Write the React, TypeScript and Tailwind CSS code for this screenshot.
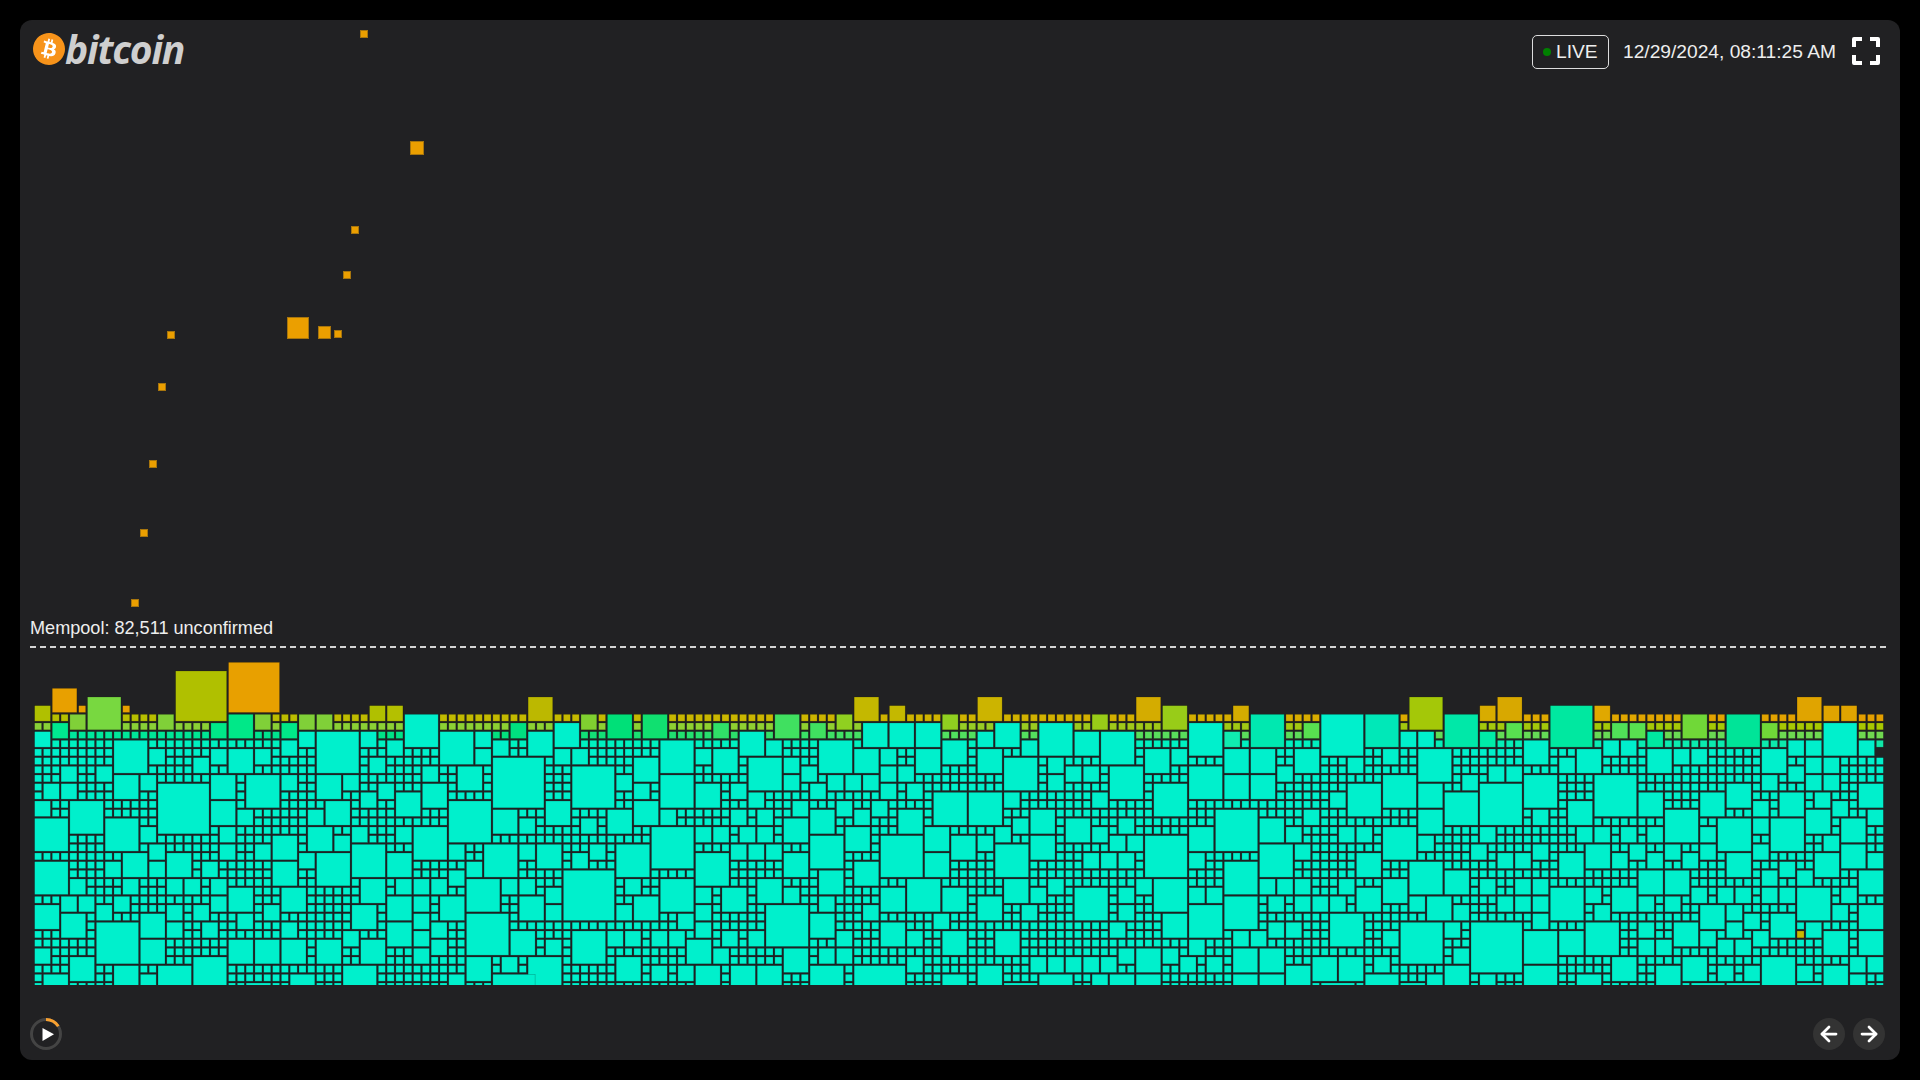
import { ArrowLeft, ArrowRight } from 'lucide-react';

const PITCH_X = 8.812;
const PITCH_Y = 8.667;
const COLS = 210;
const ROWS = 38;
const TEAL = '#00f0cc';

// coloured blocks along the top of the stack: col, row, size, fill
const hot: [number, number, number, string][] = [
  [22, 0, 6, '#e8a000'], [16, 1, 6, '#b0c000'], [2, 3, 3, '#e8a000'], [6, 4, 4, '#78d840'],
  [0, 5, 2, '#b0c000'], [5, 5, 1, '#e8a000'], [10, 5, 1, '#e8a000'], [4, 6, 2, '#80d038'],
  [14, 6, 2, '#80d038'], [25, 6, 2, '#80d038'], [30, 6, 2, '#80d038'], [32, 6, 2, '#80d038'],
  [2, 7, 2, '#00e890'], [20, 7, 2, '#00e888'], [22, 6, 3, '#00e888'], [28, 7, 2, '#00e888'],
  [38, 5, 2, '#b0c000'], [40, 5, 2, '#b4c000'], [54, 7, 2, '#00e080'], [56, 4, 3, '#bcb800'],
  [62, 6, 2, '#80d030'], [65, 6, 3, '#00e078'], [69, 6, 3, '#10e070'], [84, 6, 3, '#40e060'],
  [77, 7, 2, '#30e068'], [88, 7, 2, '#40e060'], [91, 6, 2, '#90d020'], [93, 4, 3, '#c4b800'],
  [97, 5, 2, '#c4b800'], [103, 6, 2, '#90d020'], [107, 4, 3, '#ccb400'], [125, 4, 3, '#d4ac00'],
  [128, 5, 3, '#98cc18'], [136, 5, 2, '#d4ac00'], [120, 6, 2, '#98cc18'], [138, 6, 4, '#00e8b0'],
  [144, 7, 2, '#58e050'], [156, 4, 4, '#a4c808'], [151, 6, 4, '#00e8b8'], [160, 6, 4, '#00e8a8'],
  [164, 5, 2, '#d8ac00'], [166, 4, 3, '#d8a800'], [167, 7, 2, '#58e050'], [164, 8, 2, '#00eca8'],
  [172, 5, 5, '#00e8a0'], [177, 5, 2, '#e0a800'], [179, 7, 2, '#50e058'], [181, 7, 2, '#58e050'],
  [183, 8, 2, '#00e8a0'], [187, 6, 3, '#70d838'], [192, 6, 4, '#00e498'], [196, 7, 2, '#70d838'],
  [200, 4, 3, '#e0a400'], [203, 5, 2, '#e0a400'], [205, 5, 2, '#e0a400'], [135, 8, 2, '#10ecb0'],
  [200, 31, 1, '#c8b800'],
];

// everything bigger than one cell below the hot band, "col,row,size"
const blocks = `
0,8,2 30,8,2 32,8,5 9,9,4 28,9,2 13,10,2 20,10,2 22,10,3 25,10,2 18,11,2 3,12,2 7,12,2 9,13,3 12,13,2
20,13,3 24,13,4 28,13,2 32,13,3 1,14,2 3,14,2 14,14,6 20,16,3 23,17,2 0,16,2 4,16,4 33,16,3 31,17,2 0,18,4
8,18,4 12,19,2 21,19,2 31,19,3 27,20,3 34,20,2 25,21,2 21,21,2 13,21,2 0,23,4 10,22,3 15,22,3 13,23,2 19,23,2
8,23,2 27,23,3 30,22,2 32,22,4 4,25,2 10,25,2 15,25,2 17,25,2 20,25,2 22,26,3 28,26,3 3,27,2 5,27,2 9,27,2
20,27,2 0,28,3 3,29,3 7,28,2 15,28,2 18,28,2 23,29,2 26,28,2 7,30,5 12,29,3 15,30,2 19,30,2 28,30,2 0,33,2
12,32,3 4,34,3 22,32,3 25,32,3 28,32,3 32,32,3 9,35,3 18,34,4 14,35,4 1,36,3 12,36,2 29,36,3 24,37,3
42,6,4 46,8,4 50,8,2 50,10,2 52,9,2 56,8,3 59,7,3 59,10,2 61,10,2 37,8,2 40,9,2 38,11,2 44,12,2 48,12,3
35,13,2 39,14,2 37,15,2 41,15,3 44,14,3 52,11,6 61,12,5 66,13,2 68,11,3 68,14,2 47,16,5 58,16,3 52,17,3 55,18,2
62,18,2 65,17,3 68,16,3 36,19,2 41,19,2 43,19,4 36,21,4 47,21,2 51,21,4 55,21,2 57,21,3 63,21,2 61,22,2
66,21,4 40,22,3 49,23,2 47,24,2 60,24,6 37,25,3 41,25,2 43,25,2 45,25,2 49,25,4 53,25,2 55,25,2 58,26,2 67,25,2
40,27,3 43,27,2 46,27,3 55,27,3 68,27,3 36,28,3 58,28,2 66,28,2 43,29,2 49,29,5 40,30,3 45,30,2 35,31,2 43,31,2
54,31,3 61,31,4 65,31,2 67,31,2 37,32,3 45,32,2 58,32,2 43,33,2 49,34,3 53,34,2 56,34,4 66,34,3 35,35,4 47,36,2 52,36,5
94,7,3 97,7,3 100,7,3 80,8,3 83,9,2 71,9,4 75,10,2 77,10,3 89,9,4 93,10,3 96,10,2 100,10,3 103,9,3 81,11,4
85,11,2 87,12,2 96,12,2 98,12,2 71,13,4 90,13,2 92,13,2 94,13,2 85,13,2 75,14,3 79,14,2 88,14,2 96,14,2 99,14,2
81,15,2 102,15,4 86,16,2 91,16,2 95,16,2 71,17,2 79,17,2 82,17,2 88,17,3 93,17,2 98,17,3 85,18,3 70,19,5 75,19,2
77,19,2 80,19,2 82,19,2 92,19,3 101,19,3 88,20,4 96,20,5 104,20,3 79,21,2 81,21,2 83,21,2 75,22,4 85,22,3 101,22,3
93,23,3 89,24,3 71,25,4 82,25,3 99,25,4 75,26,2 78,26,3 85,26,2 96,26,3 103,26,3 89,27,2 75,28,2 83,28,5 94,28,2
73,29,2 88,29,3 102,29,2 75,30,2 96,30,3 70,31,2 72,31,2 78,31,2 81,31,2 91,31,2 99,31,2 103,31,3 74,32,3 77,33,2
85,33,3 89,33,2 91,33,2 99,34,2 70,35,2 73,35,2 75,35,3 79,35,3 82,35,3 88,35,4 93,35,6 103,36,3
109,7,3 114,7,4 131,7,4 107,8,2 118,8,3 121,8,4 112,9,2 107,10,3 126,10,3 129,10,2 135,10,3 138,10,3 110,11,4 115,11,2
117,12,2 119,12,2 122,12,4 131,12,4 115,13,2 127,14,4 135,13,3 138,13,3 106,15,4 110,15,2 120,15,2 113,17,3 134,17,5 111,18,2
117,18,3 120,19,2 123,18,2 139,18,3 109,19,2 131,19,3 107,20,2 113,20,3 122,20,2 124,20,2 126,20,5 109,21,4 139,21,4 119,22,2
121,22,2 123,22,2 131,22,2 135,23,4 110,25,3 115,25,2 125,25,2 127,25,4 113,26,2 118,26,4 123,26,2 131,26,2 133,26,2 139,25,2
107,27,3 135,27,4 112,28,2 123,28,2 131,28,4 128,29,3 122,30,2 109,31,3 136,31,2 138,31,2 131,32,2 123,33,2 125,33,3 128,33,2
136,33,3 139,33,3 130,34,2 133,34,2 113,34,2 115,34,2 117,34,2 119,34,2 121,34,2 107,35,3 114,36,4 120,36,2 122,36,3 125,36,3
136,36,3 139,36,3 110,37,4 140,27,2 140,30,2
146,6,5 155,8,2 157,8,2 169,9,3 143,10,3 153,10,2 157,10,4 149,11,2 173,11,2 175,10,3 141,12,2 165,12,2 167,12,2
162,13,2 153,13,4 169,13,4 149,14,4 157,14,3 164,14,5 147,15,2 160,15,4 174,16,3 144,17,2 157,17,3 170,17,2 142,19,2 148,19,2
150,19,2 153,19,4 164,19,2 157,20,2 143,21,2 163,21,2 170,21,2 150,22,3 166,22,2 168,22,2 173,22,3 156,23,4 160,24,3 141,25,2
143,25,2 148,25,2 153,25,3 164,25,2 168,25,2 170,25,2 150,26,3 172,26,4 143,27,2 145,27,2 147,27,2 166,27,2 168,27,2 170,27,2
156,27,2 158,27,3 161,28,2 170,29,2 147,29,4 142,30,2 155,30,5 160,30,2 163,30,6 169,31,4 173,31,3 153,31,2 161,33,2 145,34,3
148,34,3 152,34,2 142,35,3 160,35,3 169,35,4 151,36,4 158,36,2 164,36,2 155,37,3 146,37,4
178,9,2 180,9,2 199,9,2 201,9,2 207,9,2 203,7,4 183,10,3 186,10,2 188,10,2 196,10,3 201,11,2 203,11,2 199,12,2 177,13,5
196,13,2 201,13,2 203,13,2 192,14,3 207,14,3 182,15,3 189,15,3 198,15,3 202,15,2 204,16,2 195,16,2 185,17,4 201,17,3 208,17,2
191,18,4 195,18,2 197,18,4 205,18,3 175,19,2 177,19,2 180,19,2 183,19,2 189,19,2 203,20,2 176,21,3 181,21,2 185,21,2 189,21,2
195,21,2 205,21,3 179,22,2 183,22,2 187,22,2 192,22,3 202,22,3 208,22,2 198,23,2 182,24,3 185,24,3 196,24,2 200,24,2 207,24,3
179,26,3 176,26,2 188,26,2 191,26,2 193,26,2 196,26,2 198,26,2 200,26,4 205,26,2 182,27,2 185,27,2 177,28,2 189,28,3 192,28,2
204,28,2 207,28,3 194,29,2 197,29,3 176,30,4 182,30,2 186,30,3 192,30,2 201,30,2 189,31,2 195,31,2 203,31,3 207,31,3 182,32,2
184,32,2 191,32,2 193,32,2 179,34,3 187,34,3 196,34,4 206,34,2 208,34,2 184,35,3 191,35,2 194,35,2 200,35,2 203,35,3 206,36,2
175,36,3 188,37,4 192,37,4 200,37,3
`
  .trim()
  .split(/\s+/)
  .map((b) => b.split(',').map(Number));

const lerp = (stops: [number, number[]][], c: number) => {
  let i = 0;
  while (i < stops.length - 2 && c > stops[i + 1][0]) i++;
  const [c0, a] = stops[i];
  const [c1, b] = stops[i + 1];
  const t = Math.min(1, Math.max(0, (c - c0) / (c1 - c0)));
  const mix = a.map((v, k) => Math.round(v + (b[k] - v) * t));
  return `rgb(${mix[0]},${mix[1]},${mix[2]})`;
};

const rowStops: Record<number, [number, number[]][]> = {
  6: [[0, [180, 192, 0]], [70, [200, 184, 0]], [125, [212, 176, 0]], [175, [224, 168, 0]], [209, [228, 160, 0]]],
  7: [[0, [136, 208, 56]], [90, [144, 208, 48]], [125, [160, 200, 24]], [209, [168, 200, 0]]],
  8: [[0, [0, 232, 160]], [50, [0, 224, 128]], [72, [32, 224, 112]], [100, [80, 224, 96]], [209, [112, 216, 80]]],
  9: [[0, [0, 240, 192]], [140, [0, 240, 192]], [209, [16, 232, 168]]],
};

const cellFill = (c: number, r: number) => (rowStops[r] ? lerp(rowStops[r], c) : TEAL);

function Cell({ c, r, s, fill }: { c: number; r: number; s: number; fill: string }) {
  return (
    <rect
      x={c * PITCH_X + 0.63}
      y={r * PITCH_Y + 2.3}
      width={s * PITCH_X - 1.8}
      height={s * PITCH_Y - 1.8}
      fill={fill}
      stroke="#000"
      strokeOpacity={0.3}
      strokeWidth={0.6}
    />
  );
}

function Treemap() {
  const taken = new Set<string>(['209,10']);
  const mark = (c: number, r: number, s: number) => {
    for (let x = c; x < c + s; x++) for (let y = r; y < r + s; y++) taken.add(`${x},${y}`);
  };
  hot.forEach(([c, r, s]) => mark(c, r, s));
  blocks.forEach(([c, r, s]) => mark(c, r, s));

  const singles: { c: number; r: number }[] = [];
  for (let r = 6; r < ROWS; r++) {
    for (let c = 0; c < COLS; c++) {
      if (!taken.has(`${c},${r}`)) singles.push({ c, r });
    }
  }

  return (
    <svg width={1852} height={325} viewBox="0 0 1852 325" className="ml-[14px] mt-[12px] block shrink-0">
      {singles.map(({ c, r }) => (
        <Cell key={`${c}-${r}`} c={c} r={r} s={1} fill={cellFill(c, r)} />
      ))}
      {blocks.map(([c, r, s]) => (
        <Cell key={`b${c}-${r}`} c={c} r={r} s={s} fill={TEAL} />
      ))}
      {hot.map(([c, r, s, fill]) => (
        <Cell key={`h${c}-${r}`} c={c} r={r} s={s} fill={fill} />
      ))}
    </svg>
  );
}

function Logo() {
  return (
    <div className="-mt-[3px] flex items-center">
      <svg width={32} height={32} viewBox="0 0 64 64" className="shrink-0">
        <path
          fill="#f7931a"
          d="M63.04 39.741c-4.274 17.143-21.638 27.575-38.783 23.301C7.12 58.768-3.313 41.404.962 24.262 5.234 7.117 22.597-3.317 39.737.957c17.144 4.274 27.576 21.64 23.302 38.784z"
        />
        <path
          fill="#fff"
          d="M46.11 27.441c.636-4.258-2.606-6.547-7.039-8.074l1.438-5.768-3.512-.875-1.4 5.616c-.922-.23-1.87-.447-2.812-.662l1.41-5.653-3.509-.875-1.439 5.766c-.764-.174-1.514-.346-2.242-.527l.004-.018-4.842-1.209-.934 3.75s2.605.597 2.55.634c1.422.355 1.68 1.296 1.636 2.042l-1.638 6.571c.098.025.225.061.365.117l-.37-.092-2.297 9.205c-.174.432-.615 1.08-1.609.834.035.051-2.552-.637-2.552-.637l-1.743 4.02 4.57 1.139c.85.213 1.683.436 2.502.646l-1.453 5.835 3.507.875 1.44-5.772c.957.26 1.887.5 2.797.726L27.504 50.8l3.511.875 1.453-5.823c5.987 1.133 10.49.676 12.383-4.738 1.527-4.36-.075-6.875-3.225-8.516 2.294-.531 4.022-2.04 4.483-5.157zM38.087 38.69c-1.086 4.36-8.426 2.004-10.807 1.412l1.928-7.729c2.38.594 10.011 1.77 8.88 6.317zm1.085-11.312c-.99 3.966-7.1 1.951-9.083 1.457l1.748-7.01c1.983.494 8.367 1.416 7.335 5.553z"
        />
      </svg>
      <span className="font-['Open_Sans',sans-serif] text-[39px] font-bold italic leading-none tracking-[-1.2px] text-[#cfcfcf]">
        bitcoin
      </span>
    </div>
  );
}

function FullscreenIcon() {
  return (
    <svg width={28} height={28} viewBox="0 0 28 28" fill="none" stroke="#fff" strokeWidth={4} strokeLinejoin="round">
      <path d="M2 10V2h8M18 2h8v8M26 18v8h-8M10 26H2v-8" />
    </svg>
  );
}

function PlayButton() {
  return (
    <button className="flex h-8 w-8 items-center justify-center">
      <svg width={32} height={32} viewBox="0 0 32 32" fill="none">
        <circle cx={16} cy={16} r={14.5} stroke="#444" strokeWidth={3} />
        <path d="M16 1.5A14.5 14.5 0 0 1 28.3 8.3" stroke="#f7a030" strokeWidth={3} />
        <path d="M12.5 10v13L24 16.2z" fill="#fff" />
      </svg>
    </button>
  );
}

export default function App() {
  return (
    <div className="h-screen bg-black p-5 font-['Liberation_Sans',Arial,sans-serif]">
      <div className="relative flex h-full flex-col overflow-hidden rounded-xl bg-[#212123]">
        <header className="flex items-start justify-between pl-[13px] pr-[20px] pt-[12px]">
          <Logo />
          <div className="flex items-center pt-[3px] text-[19.2px] text-[#eeeeee]">
            <div className="flex h-[34px] w-[77px] items-center rounded-[5px] border border-[#dddddd] pl-[10px]">
              <span className="h-2 w-2 rounded-full bg-[#008000]" />
              <span className="ml-[5px]">LIVE</span>
            </div>
            <span className="ml-[14px]">12/29/2024, 08:11:25 AM</span>
            <div className="mb-[2px] ml-[16px]">
              <FullscreenIcon />
            </div>
          </div>
        </header>

        <div className="min-h-0 flex-1" />

        {/* transactions falling into the stack */}
        <span className="absolute left-[340px] top-[10px] h-2 w-2 border border-[#8a6412]/70 bg-[#eb9f00]" />
        <span className="absolute left-[390px] top-[121px] h-[14px] w-[14px] border border-[#8a6412]/70 bg-[#eb9f00]" />
        <span className="absolute left-[331px] top-[206px] h-2 w-2 border border-[#8a6412]/70 bg-[#eb9f00]" />
        <span className="absolute left-[323px] top-[251px] h-2 w-2 border border-[#8a6412]/70 bg-[#eb9f00]" />
        <span className="absolute left-[267px] top-[297px] h-[22px] w-[22px] border border-[#8a6412]/70 bg-[#eb9f00]" />
        <span className="absolute left-[298px] top-[306px] h-[13px] w-[13px] border border-[#8a6412]/70 bg-[#eb9f00]" />
        <span className="absolute left-[314px] top-[310px] h-2 w-2 border border-[#8a6412]/70 bg-[#eb9f00]" />
        <span className="absolute left-[147px] top-[311px] h-2 w-2 border border-[#8a6412]/70 bg-[#eb9f00]" />
        <span className="absolute left-[138px] top-[363px] h-2 w-2 border border-[#8a6412]/70 bg-[#eb9f00]" />
        <span className="absolute left-[129px] top-[440px] h-2 w-2 border border-[#8a6412]/70 bg-[#eb9f00]" />
        <span className="absolute left-[120px] top-[509px] h-2 w-2 border border-[#8a6412]/70 bg-[#eb9f00]" />
        <span className="absolute left-[111px] top-[579px] h-2 w-2 border border-[#8a6412]/70 bg-[#eb9f00]" />

        <p className="pl-[10px] text-[18.1px] leading-[24px] text-[#eeeeee]">Mempool: 82,511 unconfirmed</p>
        <div className="ml-[10px] mt-[6px] h-[2px] w-[1860px] shrink-0 bg-[repeating-linear-gradient(90deg,#d4d4d4_0,#d4d4d4_6px,transparent_6px,transparent_10px)]" />

        <Treemap />

        <footer className="mt-[33px] flex items-center justify-between pb-[10px] pl-[10px] pr-[15px]">
          <PlayButton />
          <div className="flex gap-2">
            <button className="flex h-8 w-8 items-center justify-center rounded-full bg-[#333333] text-white">
              <ArrowLeft size={24} strokeWidth={2.75} />
            </button>
            <button className="flex h-8 w-8 items-center justify-center rounded-full bg-[#333333] text-white">
              <ArrowRight size={24} strokeWidth={2.75} />
            </button>
          </div>
        </footer>
      </div>
    </div>
  );
}
